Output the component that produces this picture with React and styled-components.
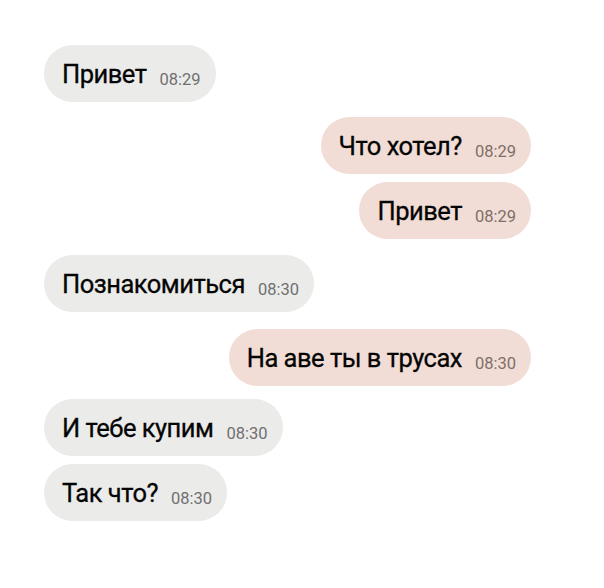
import React from 'react'
import styled, {createGlobalStyle} from 'styled-components'

const GlobalStyle = createGlobalStyle`
  html, body {
    margin: 0;
    padding: 0;
    background: #fff;
  }
  body {
    font-family: Roboto, "Liberation Sans", sans-serif;
  }
`

const Chat = styled.div`
  width: 604px;
  height: 588px;
  box-sizing: border-box;
  padding: 45px 73px 0 44px;
  display: flex;
  flex-direction: column;
`

const Row = styled.div`
  display: flex;
  justify-content: ${props => props.mine ? 'flex-end' : 'flex-start'};
  margin-top: ${props => props.gap || 0}px;
`

const Bubble = styled.div`
  height: 57px;
  box-sizing: border-box;
  padding: 3px 15px 0 18px;
  border-radius: 29px;
  display: flex;
  align-items: center;
  background: ${props => props.mine ? '#f1ddd5' : '#ebebea'};
`

const Text = styled.span`
  font-size: 25.5px;
  color: #050505;
  letter-spacing: -0.5px;
  line-height: 1;
  -webkit-text-stroke: 0.3px #050505;
`

const Time = styled.span`
  margin-left: 13px;
  margin-top: 10px;
  font-size: 16.5px;
  line-height: 1;
  color: ${props => props.mine ? '#7e6f68' : '#707070'};
`

const messages = [
  {text: 'Привет', time: '08:29', mine: false, gap: 0},
  {text: 'Что хотел?', time: '08:29', mine: true, gap: 15},
  {text: 'Привет', time: '08:29', mine: true, gap: 8},
  {text: 'Познакомиться', time: '08:30', mine: false, gap: 16},
  {text: 'На аве ты в трусах', time: '08:30', mine: true, gap: 17},
  {text: 'И тебе купим', time: '08:30', mine: false, gap: 13},
  {text: 'Так что?', time: '08:30', mine: false, gap: 8},
]

export default function App () {
  return <>
    <GlobalStyle/>
    <Chat>
      {messages.map((m, i) =>
        <Row key={i} mine={m.mine} gap={m.gap}>
          <Bubble mine={m.mine}>
            <Text>{m.text}</Text>
            <Time mine={m.mine}>{m.time}</Time>
          </Bubble>
        </Row>
      )}
    </Chat>
  </>
}
